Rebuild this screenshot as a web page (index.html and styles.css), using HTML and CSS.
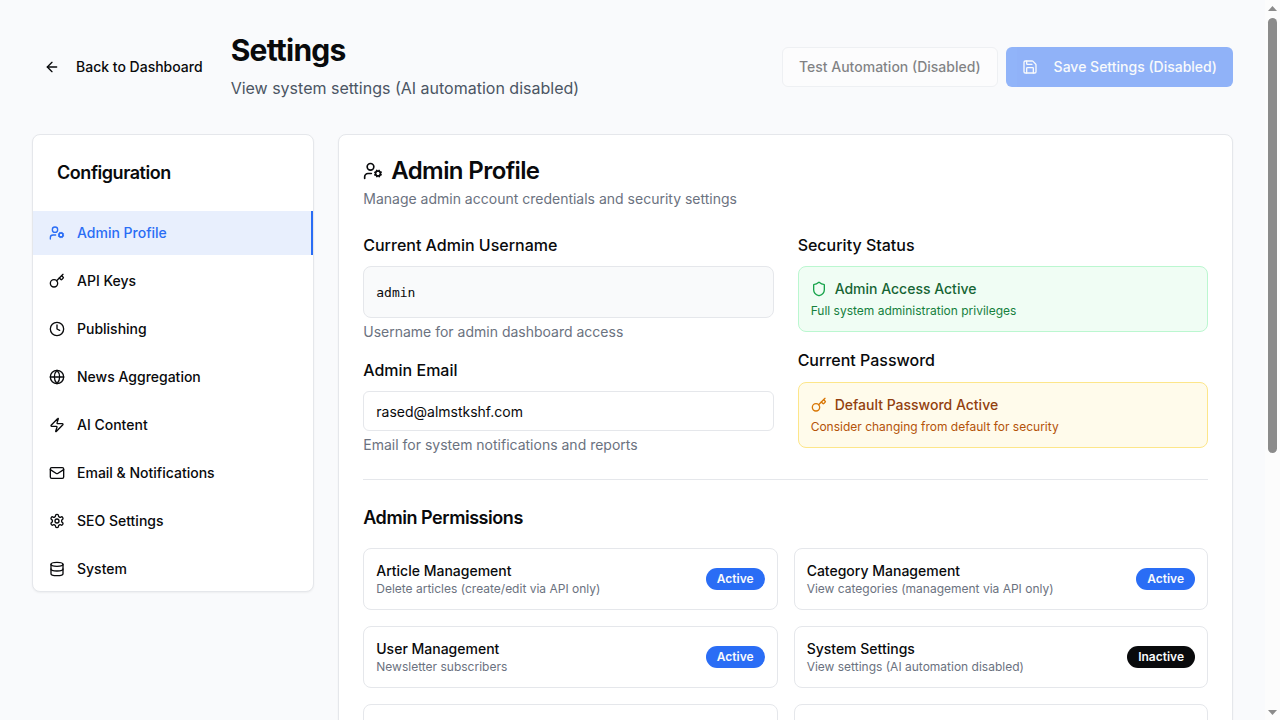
FILE: index.html
```html
<!DOCTYPE html>
<html lang="en">
<head>
<meta charset="utf-8">
<meta name="viewport" content="width=device-width, initial-scale=1">
<title>Settings</title>
<link rel="stylesheet" href="styles.css">
</head>
<body>
<svg class="sprite" aria-hidden="true">
  <symbol id="arrow-left" viewBox="0 0 24 24"><path d="m12 19-7-7 7-7"/><path d="M19 12H5"/></symbol>
  <symbol id="save" viewBox="0 0 24 24"><path d="M15.2 3a2 2 0 0 1 1.4.6l3.8 3.8a2 2 0 0 1 .6 1.4V19a2 2 0 0 1-2 2H5a2 2 0 0 1-2-2V5a2 2 0 0 1 2-2z"/><path d="M17 21v-7a1 1 0 0 0-1-1H8a1 1 0 0 0-1 1v7"/><path d="M7 3v4a1 1 0 0 0 1 1h7"/></symbol>
  <symbol id="user-cog" viewBox="0 0 24 24"><circle cx="18" cy="15" r="3"/><circle cx="9" cy="7" r="4"/><path d="M10 15H6a4 4 0 0 0-4 4v2"/><path d="m21.7 16.4-.9-.3"/><path d="m15.2 13.9-.9-.3"/><path d="m16.6 18.7.3-.9"/><path d="m19.1 12.2.3-.9"/><path d="m19.6 18.7-.4-1"/><path d="m16.8 12.3-.4-1"/><path d="m14.3 16.6 1-.4"/><path d="m20.7 13.8 1-.4"/></symbol>
  <symbol id="key" viewBox="0 0 24 24"><path d="m15.5 7.5 2.3 2.3a1 1 0 0 0 1.4 0l2.1-2.1a1 1 0 0 0 0-1.4L19 4"/><path d="m21 2-9.6 9.6"/><circle cx="7.5" cy="15.5" r="5.5"/></symbol>
  <symbol id="clock" viewBox="0 0 24 24"><circle cx="12" cy="12" r="10"/><path d="M12 6v6l4 2"/></symbol>
  <symbol id="globe" viewBox="0 0 24 24"><circle cx="12" cy="12" r="10"/><path d="M12 2a14.5 14.5 0 0 0 0 20 14.5 14.5 0 0 0 0-20"/><path d="M2 12h20"/></symbol>
  <symbol id="zap" viewBox="0 0 24 24"><path d="M4 14a1 1 0 0 1-.78-1.63l9.9-10.2a.5.5 0 0 1 .86.46l-1.92 6.02A1 1 0 0 0 13 10h7a1 1 0 0 1 .78 1.63l-9.9 10.2a.5.5 0 0 1-.86-.46l1.92-6.02A1 1 0 0 0 11 14z"/></symbol>
  <symbol id="mail" viewBox="0 0 24 24"><rect width="20" height="16" x="2" y="4" rx="2"/><path d="m22 7-8.97 5.7a1.94 1.94 0 0 1-2.06 0L2 7"/></symbol>
  <symbol id="settings" viewBox="0 0 24 24"><path d="M12.22 2h-.44a2 2 0 0 0-2 2v.18a2 2 0 0 1-1 1.73l-.43.25a2 2 0 0 1-2 0l-.15-.08a2 2 0 0 0-2.73.73l-.22.38a2 2 0 0 0 .73 2.73l.15.1a2 2 0 0 1 1 1.72v.51a2 2 0 0 1-1 1.74l-.15.09a2 2 0 0 0-.73 2.73l.22.38a2 2 0 0 0 2.73.73l.15-.08a2 2 0 0 1 2 0l.43.25a2 2 0 0 1 1 1.73V20a2 2 0 0 0 2 2h.44a2 2 0 0 0 2-2v-.18a2 2 0 0 1 1-1.73l.43-.25a2 2 0 0 1 2 0l.15.08a2 2 0 0 0 2.73-.73l.22-.39a2 2 0 0 0-.73-2.73l-.15-.08a2 2 0 0 1-1-1.74v-.5a2 2 0 0 1 1-1.74l.15-.09a2 2 0 0 0 .73-2.73l-.22-.38a2 2 0 0 0-2.73-.73l-.15.08a2 2 0 0 1-2 0l-.43-.25a2 2 0 0 1-1-1.73V4a2 2 0 0 0-2-2z"/><circle cx="12" cy="12" r="3"/></symbol>
  <symbol id="database" viewBox="0 0 24 24"><ellipse cx="12" cy="5" rx="9" ry="3"/><path d="M3 5V19A9 3 0 0 0 21 19V5"/><path d="M3 12A9 3 0 0 0 21 12"/></symbol>
  <symbol id="shield" viewBox="0 0 24 24"><path d="M20 13c0 5-3.5 7.5-7.66 8.95a1 1 0 0 1-.67-.01C7.5 20.5 4 18 4 13V6a1 1 0 0 1 1-1c2 0 4.5-1.2 6.24-2.72a1.17 1.17 0 0 1 1.52 0C14.51 3.81 17 5 19 5a1 1 0 0 1 1 1z"/></symbol>
</svg>
<div class="shell">
  <div class="page">
    <header class="page-header">
      <div class="heading-group">
        <button class="button ghost" type="button"><svg class="icon"><use href="#arrow-left"/></svg>Back to Dashboard</button>
        <div>
          <h1 class="page-title">Settings</h1>
          <p class="page-subtitle">View system settings (AI automation disabled)</p>
        </div>
      </div>
      <div class="actions">
        <button class="button outline" type="button" disabled>Test Automation (Disabled)</button>
        <button class="button primary" type="button" disabled><svg class="icon"><use href="#save"/></svg>Save Settings (Disabled)</button>
      </div>
    </header>

    <div class="columns">
      <aside class="card sidebar">
        <h2 class="sidebar-title">Configuration</h2>
        <nav class="nav">
          <button class="nav-item active" type="button"><svg class="icon"><use href="#user-cog"/></svg>Admin Profile</button>
          <button class="nav-item" type="button"><svg class="icon"><use href="#key"/></svg>API Keys</button>
          <button class="nav-item" type="button"><svg class="icon"><use href="#clock"/></svg>Publishing</button>
          <button class="nav-item" type="button"><svg class="icon"><use href="#globe"/></svg>News Aggregation</button>
          <button class="nav-item" type="button"><svg class="icon"><use href="#zap"/></svg>AI Content</button>
          <button class="nav-item" type="button"><svg class="icon"><use href="#mail"/></svg>Email &amp; Notifications</button>
          <button class="nav-item" type="button"><svg class="icon"><use href="#settings"/></svg>SEO Settings</button>
          <button class="nav-item" type="button"><svg class="icon"><use href="#database"/></svg>System</button>
        </nav>
      </aside>

      <main class="card content">
        <h2 class="content-title"><svg class="icon large"><use href="#user-cog"/></svg>Admin Profile</h2>
        <p class="content-description">Manage admin account credentials and security settings</p>

        <div class="profile">
          <div class="stack">
            <div>
              <h3 class="label">Current Admin Username</h3>
              <div class="readonly"><code class="username">admin</code></div>
              <p class="hint">Username for admin dashboard access</p>
            </div>
            <div>
              <label class="label" for="admin-email">Admin Email</label>
              <input class="input" id="admin-email" type="email" value="rased@almstkshf.com">
              <p class="hint">Email for system notifications and reports</p>
            </div>
          </div>
          <div class="stack">
            <div>
              <h3 class="label">Security Status</h3>
              <div class="notice success">
                <p class="notice-title"><svg class="icon"><use href="#shield"/></svg>Admin Access Active</p>
                <p class="notice-text">Full system administration privileges</p>
              </div>
            </div>
            <div>
              <h3 class="label">Current Password</h3>
              <div class="notice warning">
                <p class="notice-title"><svg class="icon"><use href="#key"/></svg>Default Password Active</p>
                <p class="notice-text">Consider changing from default for security</p>
              </div>
            </div>
          </div>
        </div>

        <hr class="separator">

        <h3 class="section-title">Admin Permissions</h3>
        <div class="permissions">
          <div class="permission">
            <div><p class="permission-name">Article Management</p><p class="permission-text">Delete articles (create/edit via API only)</p></div>
            <span class="badge">Active</span>
          </div>
          <div class="permission">
            <div><p class="permission-name">Category Management</p><p class="permission-text">View categories (management via API only)</p></div>
            <span class="badge">Active</span>
          </div>
          <div class="permission">
            <div><p class="permission-name">User Management</p><p class="permission-text">Newsletter subscribers</p></div>
            <span class="badge">Active</span>
          </div>
          <div class="permission">
            <div><p class="permission-name">System Settings</p><p class="permission-text">View settings (AI automation disabled)</p></div>
            <span class="badge inactive">Inactive</span>
          </div>
          <div class="permission"></div>
          <div class="permission"></div>
        </div>
      </main>
    </div>
  </div>
  <div class="scrollbar" aria-hidden="true">
    <svg class="scroll-arrow" viewBox="0 0 15 18"><path d="M3 11 7.500 6 12 11z"/></svg>
    <div class="track"><div class="thumb"></div></div>
    <svg class="scroll-arrow" viewBox="0 0 15 18"><path d="M3 8 7.500 13 12 8z"/></svg>
  </div>
</div>
</body>
</html>
```
FILE: styles.css
```css
*, *::before, *::after { box-sizing: border-box; }

:root {
  --background: #f9fafc;
  --foreground: #090a0c;
  --border: #e5e7eb;
  --muted: #6b7280;
  --primary: #2a6df5;
}

body {
  margin: 0;
  background: var(--background);
  color: var(--foreground);
  font-family: Inter, "Liberation Sans", sans-serif;
  font-size: 16px;
  line-height: 1.6;
}

h1, h2, h3, p { margin: 0; }
button, input { font: inherit; color: inherit; }

.sprite { position: absolute; width: 0; height: 0; }

.icon {
  flex: none;
  width: 16px;
  height: 16px;
  fill: none;
  stroke: currentColor;
  stroke-width: 2;
  stroke-linecap: round;
  stroke-linejoin: round;
}
.icon.large { width: 20px; height: 20px; }

.shell { display: flex; height: 100vh; overflow: hidden; }
.page { flex: 1; min-width: 0; padding: 32px; }

.page-header {
  display: flex;
  align-items: center;
  justify-content: space-between;
  margin-bottom: 32px;
}
.heading-group { display: flex; align-items: center; gap: 16px; }
.actions { display: flex; gap: 8px; }
.page-title { font-size: 30px; line-height: 36px; font-weight: 700; letter-spacing: -0.025em; }
.page-subtitle { margin-top: 8px; color: #4b5563; }

.button {
  display: inline-flex;
  align-items: center;
  justify-content: center;
  gap: 16px;
  height: 40px;
  padding: 0 16px;
  border: 0;
  border-radius: 6px;
  background: transparent;
  font-size: 14px;
  line-height: 20px;
  font-weight: 500;
  white-space: nowrap;
}
.button:disabled { opacity: 0.5; }
.button.ghost { padding: 0 12px; }
.button.outline { border: 1px solid var(--border); background: #fff; }
.button.primary { background: var(--primary); color: #f8fafc; }

.columns {
  display: grid;
  grid-template-columns: repeat(4, minmax(0, 1fr));
  align-items: start;
  gap: 24px;
}
.card {
  border: 1px solid var(--border);
  border-radius: 8px;
  background: #fff;
  box-shadow: 0 1px 2px rgb(0 0 0 / 5%);
}

.sidebar-title { padding: 24px; font-size: 18px; line-height: 28px; font-weight: 600; letter-spacing: -0.025em; }
.nav { display: flex; flex-direction: column; gap: 4px; }
.nav-item {
  display: flex;
  align-items: center;
  gap: 12px;
  padding: 12px 16px;
  border: 0;
  background: transparent;
  font-size: 14px;
  line-height: 20px;
  font-weight: 500;
  text-align: left;
}
.nav-item.active {
  border-right: 2px solid var(--primary);
  background: #e8effd;
  color: var(--primary);
}

.content { grid-column: span 3; padding: 24px; }
.content-title {
  display: flex;
  align-items: center;
  gap: 8px;
  font-size: 24px;
  line-height: 24px;
  font-weight: 600;
  letter-spacing: -0.025em;
}
.content-description { margin-top: 6px; font-size: 14px; line-height: 20px; color: var(--muted); }

.profile { display: grid; grid-template-columns: 1fr 1fr; gap: 24px; margin-top: 24px; }
.stack { display: flex; flex-direction: column; gap: 16px; }
.label { display: block; margin-bottom: 8px; font-size: 16px; font-weight: 500; }
.readonly {
  padding: 12px;
  border: 1px solid var(--border);
  border-radius: 8px;
  background: #f9fafb;
}
.username { font-family: "DejaVu Sans Mono", monospace; font-size: 13px; line-height: 20px; }
.input {
  display: block;
  width: 100%;
  height: 40px;
  padding: 8px 12px;
  border: 1px solid var(--border);
  border-radius: 6px;
  background: #fff;
  font-size: 14px;
  line-height: 20px;
}
.hint { margin-top: 4px; font-size: 14px; line-height: 20px; color: var(--muted); }

.notice { padding: 12px; border: 1px solid; border-radius: 8px; }
.notice-title { display: flex; align-items: center; gap: 8px; font-size: 14px; line-height: 20px; font-weight: 500; }
.notice-text { margin-top: 4px; font-size: 12px; line-height: 16px; }
.success { border-color: #bbf7d0; background: #f0fdf4; }
.success .notice-title { color: #166534; }
.success .icon { color: #16a34a; }
.success .notice-text { color: #15803d; }
.warning { border-color: #fde68a; background: #fffbeb; }
.warning .notice-title { color: #92400e; }
.warning .icon { color: #d97706; }
.warning .notice-text { color: #b45309; }

.separator { height: 1px; margin: 24px 0; border: 0; background: var(--border); }
.section-title { margin-bottom: 16px; font-size: 18px; line-height: 28px; font-weight: 600; letter-spacing: -0.025em; }
.permissions { display: grid; grid-template-columns: 1fr 1fr; gap: 16px; }
.permission {
  display: flex;
  align-items: center;
  justify-content: space-between;
  min-height: 62px;
  padding: 12px;
  border: 1px solid var(--border);
  border-radius: 8px;
}
.permission-name { font-size: 14px; line-height: 20px; font-weight: 500; }
.permission-text { font-size: 12px; line-height: 16px; color: var(--muted); }
.badge {
  padding: 3px 11px;
  border-radius: 11px;
  background: var(--primary);
  color: #f8fafc;
  font-size: 12px;
  line-height: 16px;
  font-weight: 600;
}
.badge.inactive { background: var(--foreground); }

.scrollbar { display: flex; flex: none; flex-direction: column; width: 15px; background: #fcfcfc; }
.scroll-arrow { flex: none; width: 15px; height: 18px; fill: #8b8b8b; }
.track { flex: 1; padding: 0 3px; }
.thumb { height: 63.6%; border-radius: 5px; background: #8b8b8b; }
```
